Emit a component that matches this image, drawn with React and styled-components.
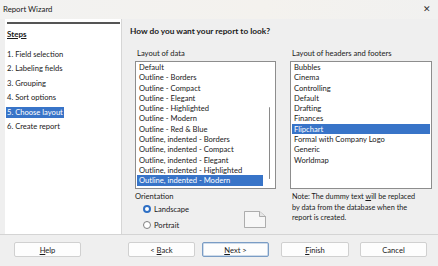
import React from 'react'
import styled, { createGlobalStyle } from 'styled-components'

const GlobalStyle = createGlobalStyle`
  html, body {
    margin: 0;
    padding: 0;
    background: #efefef;
  }
  body {
    font-family: Lato, "Open Sans", sans-serif;
    font-size: 7.6px;
    color: #1a1a1a;
  }
`

const Window = styled.div`
  width: 438px;
  height: 266px;
  display: grid;
  grid-template-rows: 19px 215px 1fr;
  background: #efefef;
  overflow: hidden;
`

const TitleBar = styled.div`
  display: flex;
  align-items: center;
  justify-content: space-between;
  padding: 0 7px 2px 3px;
  background: linear-gradient(90deg, #f2f2f1 0%, #f4f2ee 60%, #f1f1f0 100%);
  font-size: 7.8px;
`

const Close = styled.span`
  font-size: 9px;
  color: #333;
  line-height: 1;
`

const Main = styled.div`
  display: flex;
  padding-left: 5px;
`

const StepsPanel = styled.div`
  width: 114px;
  background: #fff;
  border-right: 1px solid #d6d6d6;
  padding: 3px 1px 0 1px;
  display: flex;
  flex-direction: column;
`

const Rule = styled.div`
  height: 1.5px;
  background: #555;
  margin-left: 1px;
`

const StepsTitle = styled.div`
  font-weight: 700;
  font-size: 8px;
  text-decoration: underline;
  padding: 4px 0 0 1px;
  height: 12px;
  line-height: 12px;
  margin-bottom: 9px;
`

const Step = styled.div`
  align-self: flex-start;
  height: 11px;
  line-height: 11px;
  padding: 0 1px;
  margin-bottom: 3.6px;
  background: ${p => (p.$active ? '#3874c8' : 'transparent')};
  color: ${p => (p.$active ? '#fff' : '#1a1a1a')};
`

const Content = styled.div`
  flex: 1;
  padding: 7px 0 0 8px;
  display: flex;
  flex-direction: column;
`

const Heading = styled.div`
  font-weight: 700;
  font-size: 8.3px;
  height: 11px;
  line-height: 11px;
  margin-bottom: 11px;
`

const Columns = styled.div`
  display: grid;
  grid-template-columns: 141px 142px;
  column-gap: 14px;
  padding-left: 5px;
`

const Column = styled.div`
  display: flex;
  flex-direction: column;
`

const Label = styled.div`
  padding-left: 2px;
  height: 10px;
  line-height: 10px;
  margin-bottom: 3px;
`

const ListBox = styled.div`
  position: relative;
  height: 128px;
  background: #fff;
  border: 1px solid #8d8d8d;
  padding: 0 1px;
  box-sizing: border-box;
  overflow: hidden;
`

const Row = styled.div`
  height: 10.3px;
  line-height: 10.3px;
  padding-left: 2px;
  margin-right: ${p => (p.$scroll ? '11px' : '0')};
  white-space: nowrap;
  background: ${p => (p.$selected ? '#3874c8' : 'transparent')};
  color: ${p => (p.$selected ? '#fff' : '#1a1a1a')};
`

const Thumb = styled.div`
  position: absolute;
  right: 5px;
  top: 45px;
  width: 1.5px;
  height: 72px;
  background: #8a8a8a;
  border-radius: 1px;
`

const Lower = styled.div`
  display: flex;
  justify-content: space-between;
  padding-top: 2px;
`

const Orientation = styled.div`
  display: flex;
  flex-direction: column;
`

const OrientLabel = styled.div`
  height: 11px;
  line-height: 11px;
`

const RadioRow = styled.label`
  display: flex;
  align-items: center;
  gap: 3px;
  height: 11px;
  padding-left: 8px;
  margin-top: ${p => p.$gap || 0}px;
`

const Radio = styled.span`
  width: 8px;
  height: 8px;
  border-radius: 50%;
  box-sizing: border-box;
  background: #fff;
  border: ${p => (p.$on ? '2.4px solid #2e6fc4' : '1px solid #808080')};
`

const PageIcon = styled.svg`
  margin: 20px 10px 0 0;
`

const Note = styled.div`
  padding: 3px 0 0 2px;
  font-size: 7.3px;
  line-height: 10.5px;
`

const Footer = styled.div`
  border-top: 1px solid #d4d4d4;
  display: flex;
  align-items: flex-start;
  padding: 7px 0 0 14px;
`

const Button = styled.button`
  width: ${p => p.$w || 67}px;
  height: 15px;
  margin-left: ${p => p.$ml || 0}px;
  padding: 0;
  font-family: inherit;
  font-size: 7.6px;
  color: #1a1a1a;
  background: #fdfdfd;
  border: 1px solid ${p => (p.$primary ? '#7a9cc4' : '#d0d0d0')};
  border-radius: 2px;
  box-shadow: ${p => (p.$primary ? 'inset 0 0 0 0.5px #9fb9d8' : 'none')};
  u { text-decoration: underline; }
`

const dataLayouts = [
  'Default',
  'Outline - Borders',
  'Outline - Compact',
  'Outline - Elegant',
  'Outline - Highlighted',
  'Outline - Modern',
  'Outline - Red & Blue',
  'Outline, indented - Borders',
  'Outline, indented - Compact',
  'Outline, indented - Elegant',
  'Outline, indented - Highlighted',
  'Outline, indented - Modern',
  'Outline, indented - Red & Blue',
]

const headerLayouts = [
  'Bubbles',
  'Cinema',
  'Controlling',
  'Default',
  'Drafting',
  'Finances',
  'Flipchart',
  'Formal with Company Logo',
  'Generic',
  'Worldmap',
]

const steps = [
  '1. Field selection',
  '2. Labeling fields',
  '3. Grouping',
  '4. Sort options',
  '5. Choose layout',
  '6. Create report',
]

export default function App() {
  return (
    <Window>
      <GlobalStyle />
      <TitleBar>
        <span>Report Wizard</span>
        <Close>✕</Close>
      </TitleBar>
      <Main>
        <StepsPanel>
          <Rule />
          <StepsTitle>Steps</StepsTitle>
          {steps.map((s, i) => (
            <Step key={s} $active={i === 4}>{s}</Step>
          ))}
        </StepsPanel>
        <Content>
          <Heading>How do you want your report to look?</Heading>
          <Columns>
            <Column>
              <Label>Layout of data</Label>
              <ListBox>
                {dataLayouts.map((d, i) => (
                  <Row key={d} $scroll $selected={i === 11}>{d}</Row>
                ))}
                <Thumb />
              </ListBox>
              <Lower>
                <Orientation>
                  <OrientLabel>Orientation</OrientLabel>
                  <RadioRow $gap={1}>
                    <Radio $on />
                    Landscape
                  </RadioRow>
                  <RadioRow $gap={5}>
                    <Radio />
                    Portrait
                  </RadioRow>
                </Orientation>
                <PageIcon width="22" height="17" viewBox="0 0 22 17">
                  <path d="M0.5 0.5 H15.5 L21.5 5.5 V16.5 H0.5 Z" fill="#f7f7f7" stroke="#9a9a9a" strokeWidth="0.8" />
                  <path d="M15.5 0.5 V5.5 H21.5" fill="#e6e6e6" stroke="#9a9a9a" strokeWidth="0.8" />
                </PageIcon>
              </Lower>
            </Column>
            <Column>
              <Label>Layout of headers and footers</Label>
              <ListBox>
                {headerLayouts.map((d, i) => (
                  <Row key={d} $selected={i === 6}>{d}</Row>
                ))}
              </ListBox>
              <Note>
                Note: The dummy text <u>w</u>ill be replaced<br />
                by data from the database when the<br />
                report is created.
              </Note>
            </Column>
          </Columns>
        </Content>
      </Main>
      <Footer>
        <Button><u>H</u>elp</Button>
        <Button $ml={47}>&lt; <u>B</u>ack</Button>
        <Button $ml={7} $primary><u>N</u>ext &gt;</Button>
        <Button $ml={12} $w={68}><u>F</u>inish</Button>
        <Button $ml={11}>Cancel</Button>
      </Footer>
    </Window>
  )
}
